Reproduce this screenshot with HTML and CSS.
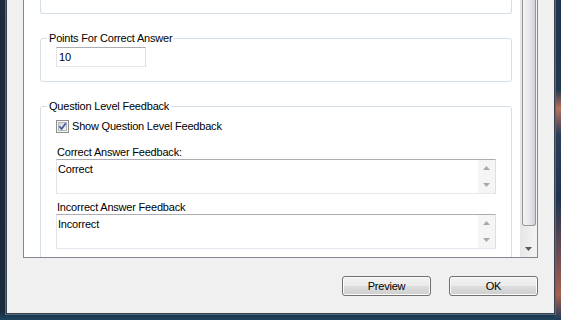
FILE: index.html
```html
<!DOCTYPE html>
<html lang="en">
<head>
  <meta charset="UTF-8" />
  <title>Question Properties</title>
  <link rel="stylesheet" href="styles.css">
</head>
<body>
  <div class="dialog">
    <div class="panel">
      <div class="panel-body">
        <div class="group-tail"></div>

        <fieldset class="group">
          <legend>Points For Correct Answer</legend>
          <div class="textbox short">10</div>
        </fieldset>

        <fieldset class="group open">
          <legend>Question Level Feedback</legend>
          <label class="check-row">
            <svg class="checkbox" width="13" height="13" viewBox="0 0 13 13">
              <defs>
                <linearGradient id="cbFill" x1="0" y1="0" x2="1" y2="1">
                  <stop offset="0" stop-color="#cdd1d8"/>
                  <stop offset="1" stop-color="#f7f7f7"/>
                </linearGradient>
              </defs>
              <rect x="0.5" y="0.5" width="12" height="12" fill="#f4f4f4" stroke="#8e8f8f"/>
              <rect x="2.5" y="2.5" width="8" height="8" fill="url(#cbFill)" stroke="#b4b8bf"/>
              <path d="M3.3 6.3 L5.6 8.9 L9.8 3.2" fill="none" stroke="#4a5a94" stroke-width="1.7"/>
            </svg>
            Show Question Level Feedback
          </label>

          <div class="field-label">Correct Answer Feedback:</div>
          <div class="textbox multi">
            <div class="tb-text">Correct</div>
            <div class="tb-scroll">
              <div class="tb-arrow"><svg width="7" height="4" viewBox="0 0 7 4"><path d="M0 4 L3.5 0 L7 4 Z" fill="#a9a9a9"/></svg></div>
              <div class="tb-arrow"><svg width="7" height="4" viewBox="0 0 7 4"><path d="M0 0 L3.5 4 L7 0 Z" fill="#a9a9a9"/></svg></div>
            </div>
          </div>

          <div class="field-label second">Incorrect Answer Feedback</div>
          <div class="textbox multi">
            <div class="tb-text">Incorrect</div>
            <div class="tb-scroll">
              <div class="tb-arrow"><svg width="7" height="4" viewBox="0 0 7 4"><path d="M0 4 L3.5 0 L7 4 Z" fill="#a9a9a9"/></svg></div>
              <div class="tb-arrow"><svg width="7" height="4" viewBox="0 0 7 4"><path d="M0 0 L3.5 4 L7 0 Z" fill="#a9a9a9"/></svg></div>
            </div>
          </div>
        </fieldset>
      </div>

      <div class="vscroll">
        <div class="thumb"></div>
        <div class="track"></div>
        <div class="arrow-btn">
          <svg width="7" height="4" viewBox="0 0 7 4"><path d="M0 0 L3.5 4 L7 0 Z" fill="#5a5a5a"/></svg>
        </div>
      </div>
    </div>

    <div class="buttons">
      <button class="btn">Preview</button>
      <button class="btn">OK</button>
    </div>
  </div>
</body>
</html>
```

FILE: styles.css
```css
html, body {
  margin: 0;
  height: 320px;
  overflow: hidden;
}
body {
  font-family: 'Liberation Sans', Arial, sans-serif;
  font-size: 11px;
  letter-spacing: -0.2px;
  color: #000;
  background:
    linear-gradient(180deg, #1f3550 0, #22384f 28%, #b8705e 34%, #2a3e58 42%, #1e3350 62%, #6d4d52 80%, #a8604f 92%, #1d3a55 100%) right top / 6px 100% no-repeat,
    linear-gradient(180deg, #1c2b3e 0, #1a2a3d 97%, #1e4560 100%);
}

.dialog {
  box-sizing: border-box;
  height: 314px;
  margin: 0 6px;
  padding: 0 16px;
  background: #f0f0f0;
  border: 1px solid #39424e;
  border-top: none;
  box-shadow: 0 0 0 1px #4d6a80;
}

/* scrolled content area */
.panel {
  display: flex;
  height: 258px;
  border: 1px solid #828790;
  border-top: none;
  box-sizing: border-box;
}
.panel-body {
  flex: 1;
  overflow: hidden;
  background: #fff;
}

.group-tail {
  height: 14px;
  box-sizing: border-box;
  margin: 0 8px 0 16px;
  border: 1px solid #d5dfe5;
  border-top: none;
  border-radius: 0 0 3px 3px;
}

.group {
  margin: 18px 8px 0 16px;
  padding: 2px 15px 14px;
  border: 1px solid #d5dfe5;
  border-radius: 3px;
  min-width: 0;
}
.group legend {
  margin-left: -9px;
  padding: 0 2px;
  line-height: 13px;
}
.group.open {
  padding-bottom: 30px;
}

.textbox {
  box-sizing: border-box;
  background: #fff;
  border: 1px solid;
  border-color: #abadb3 #dbdfe6 #e3e9ef #e2e3ea;
}
.textbox.short {
  width: 90px;
  height: 20px;
  padding-left: 2px;
  line-height: 18px;
}
.textbox.multi {
  display: flex;
  height: 35px;
}
.tb-text {
  flex: 1;
  padding: 3px 1px;
  line-height: 13px;
}
.tb-scroll {
  width: 17px;
  display: flex;
  flex-direction: column;
  background: #f5f5f5;
}
.tb-arrow {
  flex: 1;
  display: flex;
  align-items: center;
  justify-content: center;
}

.check-row {
  display: flex;
  align-items: center;
  gap: 3px;
  height: 13px;
  margin-top: 5px;
  line-height: 13px;
}
.checkbox {
  flex: none;
}

.field-label {
  margin-top: 13px;
  padding-left: 1px;
  line-height: 13px;
}
.field-label.second {
  margin-top: 7px;
}

/* outer vertical scrollbar */
.vscroll {
  width: 17px;
  display: flex;
  flex-direction: column;
  background: linear-gradient(90deg, #e6e6e6, #f4f4f4);
}
.thumb {
  height: 226px;
  box-sizing: border-box;
  margin-left: 2px;
  width: 14px;
  border: 1px solid #979797;
  border-top: none;
  border-radius: 0 0 3px 3px;
  background: linear-gradient(90deg, #f4f4f6, #e9e9ee 45%, #d2d3da);
}
.track {
  flex: 1;
}
.arrow-btn {
  height: 17px;
  display: flex;
  align-items: center;
  justify-content: center;
}

.buttons {
  display: flex;
  justify-content: flex-end;
  gap: 18px;
  margin-top: 18px;
}
.btn {
  width: 89px;
  height: 20px;
  padding: 0;
  font: inherit;
  letter-spacing: inherit;
  color: #000;
  border: 1px solid #707070;
  border-radius: 3px;
  background: linear-gradient(180deg, #f2f2f2 0, #ebebeb 50%, #dddddd 50%, #cfcfcf 100%);
  box-shadow: inset 0 0 0 1px #fbfbfb;
}
```
